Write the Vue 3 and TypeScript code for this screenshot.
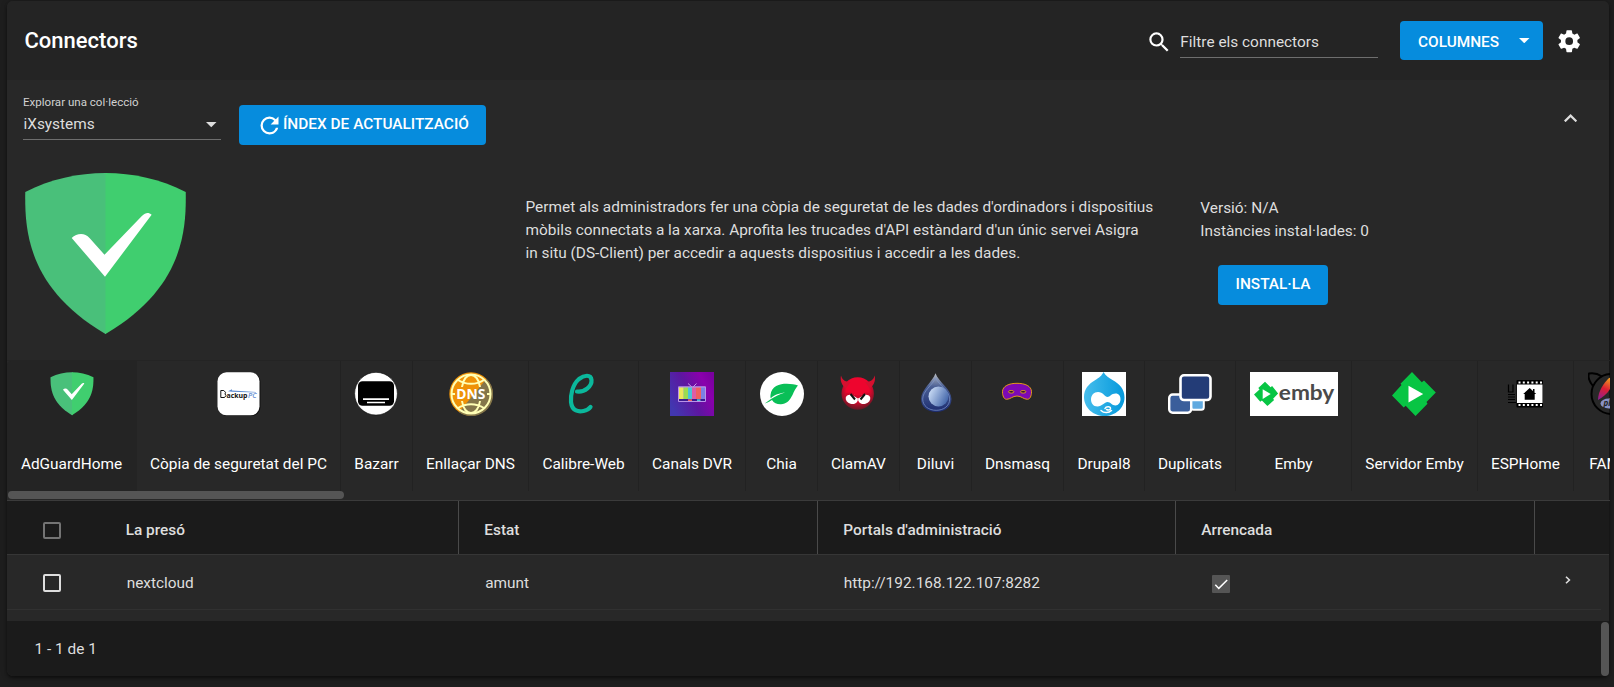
<script setup lang="ts">
interface Plugin {
  id: string
  label: string
  width: number
}

interface Column {
  label: string
  width: number
}

const plugins: Plugin[] = [
  { id: 'adguard', label: 'AdGuardHome', width: 130 },
  { id: 'backuppc', label: 'Còpia de seguretat del PC', width: 204 },
  { id: 'bazarr', label: 'Bazarr', width: 72 },
  { id: 'dns', label: 'Enllaçar DNS', width: 116 },
  { id: 'calibre', label: 'Calibre-Web', width: 110 },
  { id: 'channels', label: 'Canals DVR', width: 107 },
  { id: 'chia', label: 'Chia', width: 72 },
  { id: 'clamav', label: 'ClamAV', width: 82 },
  { id: 'deluge', label: 'Diluvi', width: 72 },
  { id: 'dnsmasq', label: 'Dnsmasq', width: 92 },
  { id: 'drupal', label: 'Drupal8', width: 81 },
  { id: 'duplicati', label: 'Duplicats', width: 91 },
  { id: 'emby', label: 'Emby', width: 116 },
  { id: 'embyserver', label: 'Servidor Emby', width: 126 },
  { id: 'esphome', label: 'ESPHome', width: 96 },
  { id: 'famp', label: 'FAMP', width: 72 },
]

const columns: Column[] = [
  { label: 'Estat', width: 359 },
  { label: "Portals d'administració", width: 358 },
  { label: 'Arrencada', width: 359 },
]
</script>

<template>
  <div class="page">
    <main class="card">
      <header class="toolbar">
        <h1>Connectors</h1>
        <svg class="search" viewBox="0 0 24 24"><path d="M9.5 3A6.5 6.5 0 0 1 16 9.5c0 1.61-.59 3.09-1.56 4.23l.27.27h.79l5 5-1.5 1.5-5-5v-.79l-.27-.27A6.516 6.516 0 0 1 9.500 16 6.500 6.500 0 0 1 3 9.500 6.500 6.500 0 0 1 9.500 3m0 2C7 5 5 7 5 9.500S7 14 9.500 14 14 12 14 9.500 12 5 9.500 5Z" /></svg>
        <div class="filter">Filtre els connectors</div>
        <button class="btn columns-btn">
          <span>COLUMNES</span>
          <svg class="caret" viewBox="0 0 10 5"><path d="M0 0h10L5 5z" /></svg>
        </button>
        <svg class="gear" viewBox="0 0 24 24"><path d="M12 15.500A3.500 3.500 0 0 1 8.500 12 3.500 3.500 0 0 1 12 8.500a3.500 3.500 0 0 1 3.500 3.500 3.500 3.500 0 0 1-3.500 3.500m7.430-2.530c.04-.32.07-.64.07-.97s-.03-.66-.07-1l2.110-1.630c.19-.15.24-.42.12-.64l-2-3.460c-.12-.22-.39-.31-.61-.22l-2.490 1c-.52-.39-1.060-.73-1.690-.98l-.37-2.650A.506.506 0 0 0 14 2h-4c-.25 0-.46.18-.5.42l-.37 2.650c-.63.25-1.170.59-1.690.98l-2.490-1c-.22-.09-.49 0-.61.22l-2 3.460c-.13.22-.07.49.12.64L4.570 11c-.04.34-.07.67-.07 1s.03.65.07.97l-2.110 1.660c-.19.15-.25.42-.12.64l2 3.460c.12.22.39.3.61.22l2.490-1.010c.52.4 1.060.74 1.690.99l.37 2.650c.04.24.25.42.5.42h4c.25 0 .46-.18.5-.42l.37-2.650c.63-.26 1.170-.59 1.690-.99l2.490 1.010c.22.08.49 0 .61-.22l2-3.460c.12-.22.07-.49-.12-.64Z" /></svg>
      </header>

      <section class="browse">
        <div class="select">
          <label>Explorar una col·lecció</label>
          <div class="value">
            <span>iXsystems</span>
            <svg class="caret" viewBox="0 0 10 5"><path d="M0 0h10L5 5z" /></svg>
          </div>
        </div>
        <button class="btn refresh-btn">
          <svg viewBox="0 0 24 24"><path d="M17.650 6.350A7.960 7.960 0 0 0 12 4a8 8 0 0 0-8 8 8 8 0 0 0 8 8c3.730 0 6.840-2.550 7.730-6h-2.080A5.990 5.990 0 0 1 12 18a6 6 0 0 1-6-6 6 6 0 0 1 6-6c1.660 0 3.140.69 4.220 1.780L13 11h7V4z" /></svg>
          <span>ÍNDEX DE ACTUALITZACIÓ</span>
        </button>
        <svg class="collapse" viewBox="0 0 12 7.400"><path d="M6 0 0 6l1.410 1.400L6 2.830l4.590 4.570L12 6z" /></svg>
      </section>

      <section class="details">
        <svg class="shield" viewBox="0 0 160 160.500">
          <path fill="#49c07a" d="M80.500 0H80C53 0 25 6 0 19-.5 57 2 114.500 80 160.500h.5z" />
          <path fill="#40ce6f" d="M80 0c27 0 55 6 80 19 .5 38-2 95.500-80 141.500z" />
          <path fill="#fff" d="M46.300 64.700c5-4.500 12.500-6 18 .3L79 81.500 116 43c4.500-4 7-3.500 10-1.500L79.500 103.500z" />
        </svg>
        <p>Permet als administradors fer una còpia de seguretat de les dades d'ordinadors i dispositius mòbils connectats a la xarxa. Aprofita les trucades d'API estàndard d'un únic servei Asigra in situ (DS-Client) per accedir a aquests dispositius i accedir a les dades.</p>
        <div class="meta">
          <div>Versió: N/A</div>
          <div>Instàncies instal·lades: 0</div>
          <button class="btn install"><span>INSTAL·LA</span></button>
        </div>
      </section>

      <section class="strip">
        <div class="tabs">
          <div
            v-for="(p, i) in plugins"
            :key="p.id"
            class="tab"
            :class="{ active: i === 0 }"
            :style="{ width: p.width + 'px' }"
          >
            <svg v-if="p.id === 'adguard'" class="icon" viewBox="-2 -1 164 164">
              <path fill="#49c07a" d="M82 0h-2C53 0 25 6 0 19-.5 57 2 114.500 80 160.500l2-1z" />
              <path fill="#40ce6f" d="M80 0c27 0 55 6 80 19 .5 38-2 95.500-80 141.500z" />
              <path fill="#fff" d="M46.300 64.700c5-4.500 12.500-6 18 .3L79 81.500 116 43c4.500-4 7-3.500 10-1.500L79.500 103.500z" />
            </svg>
            <svg v-else-if="p.id === 'backuppc'" class="icon" viewBox="0 0 44 44">
              <rect x="1" y="1" width="42.500" height="43" rx="9" fill="#111" />
              <rect x=".5" y=".3" width="42" height="43" rx="9" fill="#fff" />
              <path d="m11 19.200 4-1.900v1.200L39 20v.6L15 19.800z" fill="#5b8ad0" />
              <path d="M7.500 25.500H3.800v-7h3l1.700 1.800-.5 1.700 1 1.500z" fill="none" stroke="#111" />
              <text x="9.500" y="25.600" font-size="7.500" font-weight="700" textLength="21" lengthAdjust="spacingAndGlyphs" fill="#111">ackup</text>
              <text x="31" y="25.600" font-size="7.500" font-weight="600" font-style="italic" textLength="8.500" lengthAdjust="spacingAndGlyphs" fill="#5f8dd2">PC</text>
            </svg>
            <svg v-else-if="p.id === 'bazarr'" class="icon shift" viewBox="0 0 44 44">
              <circle cx="22" cy="21.700" r="21.400" fill="#fff" stroke="#111" stroke-width=".7" />
              <rect x="4" y="9.300" width="36" height="24.500" rx="4.500" fill="#000" />
              <path d="M9 27.200h26M13 30.500h18" stroke="#fff" stroke-width="1.700" />
            </svg>
            <svg v-else-if="p.id === 'dns'" class="icon" viewBox="0 0 44 44">
              <circle cx="22" cy="22" r="21.700" fill="#ef9207" />
              <path d="M37.500 6.800A21.700 21.700 0 0 1 10 40.200z" fill="#84764a" />
              <g fill="none" stroke="#ffffb5" stroke-width="2">
                <circle cx="22" cy="22" r="19.500" />
                <path d="M13 15C14 7 18 3 22 3s8 4 9 12M13 29c1 8 5 12 9 12s8-4 9-12M9 8c8 5 18 5 26 0M9 36c8-5 18-5 26 0M2 22h4M38 22h4" />
              </g>
              <text x="7.300" y="27.200" font-size="14.800" font-weight="700" textLength="29" lengthAdjust="spacingAndGlyphs" fill="#fff">DNS</text>
            </svg>
            <svg v-else-if="p.id === 'calibre'" class="icon shift" viewBox="0 0 44 44">
              <path d="M16 19.500C24 20.500 31 14 30.500 8 30 2 23 3 18 7c-7 6-8.500 17-8 23 1 9.500 8 10 12.500 9 3-.6 5.500-2 7-4" fill="none" stroke="#0bb89c" stroke-width="4.200" stroke-linecap="round" />
            </svg>
            <svg v-else-if="p.id === 'channels'" class="icon" viewBox="0 0 44 44">
              <defs>
                <linearGradient id="dvr" x1="0" y1=".7" x2="1" y2=".2"><stop offset="0" stop-color="#4237b0" /><stop offset=".45" stop-color="#5d16a0" /><stop offset=".8" stop-color="#8a00ac" /><stop offset="1" stop-color="#7b00a0" /></linearGradient>
              </defs>
              <rect width="44" height="44" fill="url(#dvr)" />
              <path d="m18 11.500 4.500 4 4-4" fill="none" stroke="#c79ae6" />
              <rect x="8" y="14.300" width="28" height="15.700" rx="1" fill="#b993e8" />
              <path fill="#ece75a" d="M9 15.500h4.500v11.500H9z" /><path fill="#9bdc50" d="M13.500 15.500H18v11.500h-4.500z" />
              <path fill="#4cc3d8" d="M18 15.500h4v11.500h-4z" /><path fill="#dd5ea6" d="M22 15.500h4v11.500h-4z" />
              <path fill="#f06060" d="M26 15.500h5v11.500h-5z" /><path fill="#7b7fe4" d="M31 15.500h4v11.500h-4z" />
              <path fill="#3c1a90" d="M9 27h26v2H9z" /><path fill="#f06060" d="M18 27.300h4v1.700h-4z" /><path fill="#4cc3d8" d="M27 27.300h3.500v1.700H27z" />
            </svg>
            <svg v-else-if="p.id === 'chia'" class="icon" viewBox="0 0 44 44">
              <circle cx="22" cy="22" r="22" fill="#fff" />
              <path d="M38 13.500C31 11 12 9 10.500 23c-.2 2 0 2.500.3 3.200C14 23 20 21 25 20.500c-6 2-11 4.500-14 6.500l-6.300 4.500C9 30 11 28.500 12 28c2 3.500 5 4.300 9 4.200 11-.5 11-12.200 17-18.700z" fill="#09bf57" />
            </svg>
            <svg v-else-if="p.id === 'clamav'" class="icon shift" viewBox="0 0 44 44">
              <defs><radialGradient id="clam" cx=".5" cy=".35" r=".7"><stop offset=".5" stop-color="#ee052e" /><stop offset="1" stop-color="#4c1a22" /></radialGradient></defs>
              <circle cx="21.700" cy="21.500" r="16.200" fill="url(#clam)" />
              <path d="M5 3.500c1.500 5 5 6.500 9.500 6.500L10 16.500C5.500 13 4 8.500 5 3.500zM38.700 3.500c-1.500 5-5 6.500-9.500 6.500l4.500 6.500c4.500-3.500 6-8 5-13z" fill="#d5102f" />
              <ellipse cx="15.800" cy="27" rx="6.200" ry="5" transform="rotate(15 16 27)" fill="#fff" /><ellipse cx="28.200" cy="27" rx="6.200" ry="5" transform="rotate(-15 28 27)" fill="#fff" />
              <path d="M10 23.500 15 22.500l6 3.500h2l6-3.500 5 1V21l-5-.5-6 3-2 0-6-3-5 .5z" fill="#d0082a" />
              <path d="m14.500 22 4.500 5.500M29 22l-4.500 5.500" stroke="#111" stroke-width="2" />
            </svg>
            <svg v-else-if="p.id === 'deluge'" class="icon" viewBox="0 0 44 44">
              <defs>
                <linearGradient id="drop" x1="0" y1="0" x2="0" y2="1"><stop offset="0" stop-color="#b8bcc2" /><stop offset=".35" stop-color="#4a5f94" /><stop offset="1" stop-color="#1c2c70" /></linearGradient>
                <linearGradient id="shine" x1="0" y1=".2" x2="1" y2=".7"><stop offset="0" stop-color="#cfe0f8" /><stop offset="1" stop-color="#3f63a8" /></linearGradient>
              </defs>
              <path d="M21.500 1.300c3 8.700 16 16 16 25.700 0 8-6.500 13-15.300 13S7 35 7 27C7 17.500 18.500 10 21.500 1.300z" fill="url(#drop)" />
              <path d="M21.700 6c3 7 14 13 14 21 0 7-6 11.300-13.500 11.300S8.700 34 8.700 27C8.700 19 18.500 13 21.700 6z" fill="none" stroke="#8098cc" stroke-width=".7" />
              <circle cx="24.500" cy="24.500" r="10" fill="url(#shine)" />
            </svg>
            <svg v-else-if="p.id === 'dnsmasq'" class="icon shift" viewBox="0 0 44 44">
              <path d="M22 11.300c8 0 14.500 2.700 14.500 8.500 0 4-1.500 7.500-4 7.500-4 0-6-3.300-10.500-3.300S15.500 27.300 11.500 27.300c-2.500 0-4-3.500-4-7.500 0-5.800 6.500-8.500 14.500-8.500z" fill="#7d09b4" stroke="#e59a17" stroke-width="1" />
              <ellipse cx="16.200" cy="19.800" rx="2.700" ry="1.300" fill="#2a1030" stroke="#e8a51a" stroke-width=".9" /><ellipse cx="28.200" cy="19.800" rx="2.700" ry="1.300" fill="#2a1030" stroke="#e8a51a" stroke-width=".9" />
            </svg>
            <svg v-else-if="p.id === 'drupal'" class="icon" viewBox="0 0 44 44">
              <defs><linearGradient id="dru"><stop offset="0" stop-color="#46bdec" /><stop offset="1" stop-color="#0599dc" /></linearGradient></defs>
              <rect width="44" height="44" fill="#fff" />
              <path d="M21.500 0c2 4 5 5.500 9 8 7 4 12 9 12 17.500C42.500 36 33.500 44 22.500 44S2 36 2 25C2 17 6.500 12 13 8.200 17.500 5.500 19.500 4 21.500 0z" fill="url(#dru)" />
              <path d="M16 20c5 0 7 5 9.500 5 2.200 0 4-3.500 8-3.500 3.500 0 5 2.500 5 5.800s-2 6.200-5 6.200c-3.500 0-5-3.500-8-3.500S20 34.500 15.500 34.500C11 34.500 9 31 9 27.500 9 23 12 20 16 20z" fill="#fff" />
              <path d="M23 36.500c1-2 5.500-2.500 5.500 0 0 2-3 1.500-4 1M19 38.500c3 3 8 2.500 10.500 0" fill="none" stroke="#fff" stroke-width="1.500" stroke-linecap="round" />
            </svg>
            <svg v-else-if="p.id === 'duplicati'" class="icon" viewBox="0 0 44 44">
              <rect x="23" y="26" width="12.800" height="11.700" rx="2.500" fill="#61aae0" stroke="#fff" stroke-width="2" />
              <rect x="1.200" y="22.500" width="22" height="18.200" rx="3.500" fill="#3a5e9b" stroke="#fff" stroke-width="2.400" />
              <rect x="12.500" y="3.300" width="30" height="24.700" rx="3.500" fill="#233c77" stroke="#fff" stroke-width="2.600" />
            </svg>
            <svg v-else-if="p.id === 'emby'" class="icon wide" viewBox="0 0 88 44">
              <rect width="88" height="44" fill="#fff" />
              <path d="m15 9.800 5.600 5.500 1.500-1.300 6 7.500-5 5.200 1 1.300-6.700 6-5.500-5.500-1.600 1.300L4 22.500l5.500-5-1.200-1.500z" fill="#08c544" /><path d="M12.700 17.200v9.800l8-4.900z" fill="#fff" />
              <text class="emby-word" x="28.800" y="28.300" font-size="21" textLength="55.500" lengthAdjust="spacingAndGlyphs">emby</text>
            </svg>
            <svg v-else-if="p.id === 'embyserver'" class="icon shift" viewBox="0 0 44 44">
              <path d="m20 0 9.800 10.300L32 8.500l11.800 12-9.300 9.500 1 1.800L23.500 44l-9.800-10.300-2 1.800L0 23.500 9.500 13 8.500 11.700z" fill="#08c544" /><path d="M16.500 13.800v16.700L31.200 22z" fill="#fff" />
            </svg>
            <svg v-else-if="p.id === 'esphome'" class="icon shift" viewBox="0 0 44 44">
              <path d="M5.500 12.500v7.500H10V12.500M5 22.500h7M5 25h7M5 27.500h7M5 30.500h8" fill="none" stroke="#000" stroke-width="1.200" />
              <rect x="13.500" y="8" width="26.500" height="27.500" rx="1" fill="#000" />
              <path d="M15.500 10.500h24M15.500 33h24" stroke="#fff" stroke-width="2" stroke-dasharray="2 2.300" />
              <rect x="14" y="12.500" width="25.500" height="18.500" fill="#fff" />
              <path d="m26.700 16 6.500 6h-1.500v5.800h-10V22h-1.500zM30 17h1.500v3H30z" fill="#000" />
            </svg>
            <svg v-else class="icon" viewBox="0 0 44 44">
              <defs><linearGradient id="feather" x1=".6" y1="0" x2=".3" y2="1"><stop offset="0" stop-color="#f09a20" /><stop offset=".5" stop-color="#dc1e35" /><stop offset="1" stop-color="#92208c" /></linearGradient></defs>
              <circle cx="23.500" cy="22" r="20" fill="none" stroke="#000" stroke-width="2" />
              <path d="M5 14C1 9 0 4 1 1.500c5-1 10 1 13 3" fill="none" stroke="#000" stroke-width="2" />
              <path d="M10 28c0-9 6-17 11-22l3-1-2 12c-3 5-7 8-12 11z" fill="url(#feather)" />
              <ellipse cx="21" cy="31.500" rx="8.500" ry="5" fill="#8892c8" />
              <text x="15.500" y="34" font-size="8" font-weight="700" font-style="italic" fill="#222">php</text>
            </svg>
            <span>{{ p.label }}</span>
          </div>
        </div>
        <div class="hscroll"></div>
      </section>

      <section class="table">
        <div class="thead">
          <div class="check-cell"><i class="box dim"></i></div>
          <div class="th first">La presó</div>
          <div v-for="c in columns" :key="c.label" class="th" :style="{ width: c.width + 'px' }">{{ c.label }}</div>
        </div>
        <div class="row">
          <div class="check-cell"><i class="box"></i></div>
          <div class="td first">nextcloud</div>
          <div class="td state">amunt</div>
          <div class="td portal">http://192.168.122.107:8282</div>
          <div class="td boot">
            <svg class="checked" viewBox="0 0 18 18"><rect width="18" height="18" rx="1" fill="#555" /><path d="m3.300 9.700 3.500 3.700L15.200 5" fill="none" stroke="#fff" stroke-width="1.500" /></svg>
          </div>
          <div class="expand"><svg viewBox="0 0 6 8"><path d="m1 .7 3.400 3.300L1 7.300" /></svg></div>
        </div>
      </section>

      <footer class="footer">
        <span>1 - 1 de 1</span>
        <div class="vscroll"></div>
      </footer>
    </main>
  </div>
</template>

<style>
html,
body {
  background: #1e1e1e;
  overflow: hidden;
}
</style>

<style scoped>
.page {
  box-sizing: border-box;
  height: 687px;
  padding: 1px 4px 0 7px;
  overflow: hidden;
  background: #1e1e1e;
  color: #dedede;
  font: 15.4px/23px Roboto, sans-serif;
}
.page *,
.page *::before {
  box-sizing: border-box;
}
.card {
  display: flex;
  flex-direction: column;
  width: 1602px;
  height: 675px;
  border-radius: 6px;
  background: #282828;
  box-shadow: 0 2px 3px rgba(0, 0, 0, 0.4), 0 1px 6px rgba(0, 0, 0, 0.25);
}
.toolbar {
  display: flex;
  align-items: center;
  flex: 0 0 79px;
  padding: 0 26.600px 0 17.500px;
  border-radius: 6px 6px 0 0;
  background: #242424;
}
h1 {
  margin: 0;
  font-size: 22px;
  font-weight: 500;
  line-height: 30px;
  color: #fff;
}
.search {
  width: 26.400px;
  height: 26.400px;
  margin: 2.500px 7.600px 0 auto;
  fill: #fff;
}
.filter {
  width: 198px;
  height: 33px;
  margin: 2px 22px 0 0;
  padding: 5.500px 0 0 .300px;
  border-bottom: 1px solid #6e6e6e;
}
.btn {
  display: flex;
  align-items: center;
  margin: 0;
  padding: 0;
  border: 0;
  border-radius: 4px;
  background: #068cdd;
  color: #fff;
  font: 500 15.4px/23px Roboto, sans-serif;
}
.columns-btn {
  width: 143px;
  height: 39px;
  padding: 3px 13.500px 0 18px;
  justify-content: space-between;
}
.caret {
  width: 10.500px;
  height: 5.300px;
  fill: #fff;
}
.columns-btn .caret {
  margin-bottom: 3px;
}
.gear {
  width: 26.400px;
  height: 26.400px;
  margin: 1px 0 0 13px;
  fill: #fff;
}
.browse {
  display: flex;
  flex: 0 0 74px;
  align-items: flex-start;
  padding: 15px 32px 0 16px;
}
.select {
  width: 198px;
  height: 45px;
  border-bottom: 1px solid #6e6e6e;
}
.select label {
  display: block;
  height: 16px;
  font-size: 11.550px;
  line-height: 15px;
  color: #d2d2d2;
}
.value {
  display: flex;
  align-items: center;
  justify-content: space-between;
  padding: 2px 4.500px 0 .500px;
}
.value .caret {
  margin-top: 1px;
  fill: #dedede;
}
.refresh-btn {
  width: 247px;
  height: 40px;
  margin: 10px 0 0 18px;
  padding: 0 0 2px 17px;
}
.refresh-btn svg {
  width: 27px;
  height: 27px;
  margin-top: 2px;
  fill: #fff;
}
.collapse {
  width: 13.200px;
  height: 8.200px;
  margin: 19px 0 0 auto;
  fill: #ddd;
}
.details {
  display: flex;
  flex: 0 0 206px;
  padding: 0 0 0 18px;
}
.shield {
  width: 161px;
  height: 161px;
  margin-top: 19px;
}
.details p {
  width: 628.800px;
  margin: 42px 0 0 339.500px;
}
.meta {
  margin: 43px 0 0 46px;
}
.btn.install {
  width: 110px;
  height: 40px;
  margin: 22px 0 0 17.700px;
  padding-bottom: 2px;
  justify-content: center;
}
.strip {
  flex: 0 0 141px;
  width: 1603px;
  overflow: hidden;
  border-top: 1px solid #242424;
  border-bottom: 1px solid #3b3b3b;
}
.tabs {
  display: flex;
  width: 1700px;
  height: 130px;
}
.tab {
  display: flex;
  flex: 0 0 auto;
  flex-direction: column;
  align-items: center;
  padding-top: 11px;
  border-right: 1px solid #222;
  color: #fff;
  white-space: nowrap;
}
.tab.active {
  border-right-color: #242424;
  border-radius: 4px 0 0;
  background: #242424;
}
.icon {
  width: 44px;
  height: 44px;
  margin-bottom: 37px;
  font-family: 'Open Sans', sans-serif;
}
.icon.shift {
  margin-right: 1px;
}
.icon.wide {
  width: 88px;
}
.emby-word {
  fill: #4a4a4a;
  font-family: Lato, sans-serif;
  font-weight: 700;
}
.hscroll {
  width: 336px;
  height: 8px;
  margin-left: 1px;
  border-radius: 4px;
  background: #555;
}
.thead,
.row {
  display: flex;
}
.thead {
  height: 54px;
  border-bottom: 1px solid #363636;
  background: #1b1b1b;
  font-weight: 500;
}
.th {
  padding: 18px 0 0 25.300px;
  border-right: 1px solid #4a4a4a;
}
.th.first {
  width: 333px;
  padding-left: 0;
}
.check-cell {
  flex: 0 0 118.700px;
  padding-left: 36px;
}
.thead .check-cell {
  padding-top: 20.500px;
}
.thead .th.first {
  width: 333.300px;
}
.row .check-cell {
  padding-top: 19px;
}
.box {
  display: block;
  width: 17.600px;
  height: 17.600px;
  border: 2px solid #dedede;
  border-radius: 2px;
}
.box.dim {
  border-color: #747474;
}
.row {
  width: 1594px;
  height: 55px;
  border-bottom: 1px solid #313131;
}
.td {
  padding-top: 17px;
  padding-left: 1px;
}
.td.first {
  width: 358.500px;
}
.td.state {
  width: 358.500px;
}
.td.portal {
  width: 358.300px;
}
.td.boot {
  width: 364.500px;
  padding: 19.500px 0 0 11px;
}
.checked {
  display: block;
  width: 18px;
  height: 18px;
}
.expand svg {
  display: block;
  width: 6px;
  height: 8px;
  margin-top: 21px;
  fill: none;
  stroke: #dedede;
  stroke-width: 1.600;
}
.footer {
  display: flex;
  justify-content: space-between;
  margin-top: auto;
  height: 55px;
  padding: 0 0 0 27.500px;
  border-radius: 0 0 6px 6px;
  background: #1b1b1b;
}
.footer span {
  padding-top: 16.500px;
}
.vscroll {
  width: 8px;
  height: 54px;
  margin-top: 1px;
  border-radius: 4px;
  background: #555;
}
</style>
